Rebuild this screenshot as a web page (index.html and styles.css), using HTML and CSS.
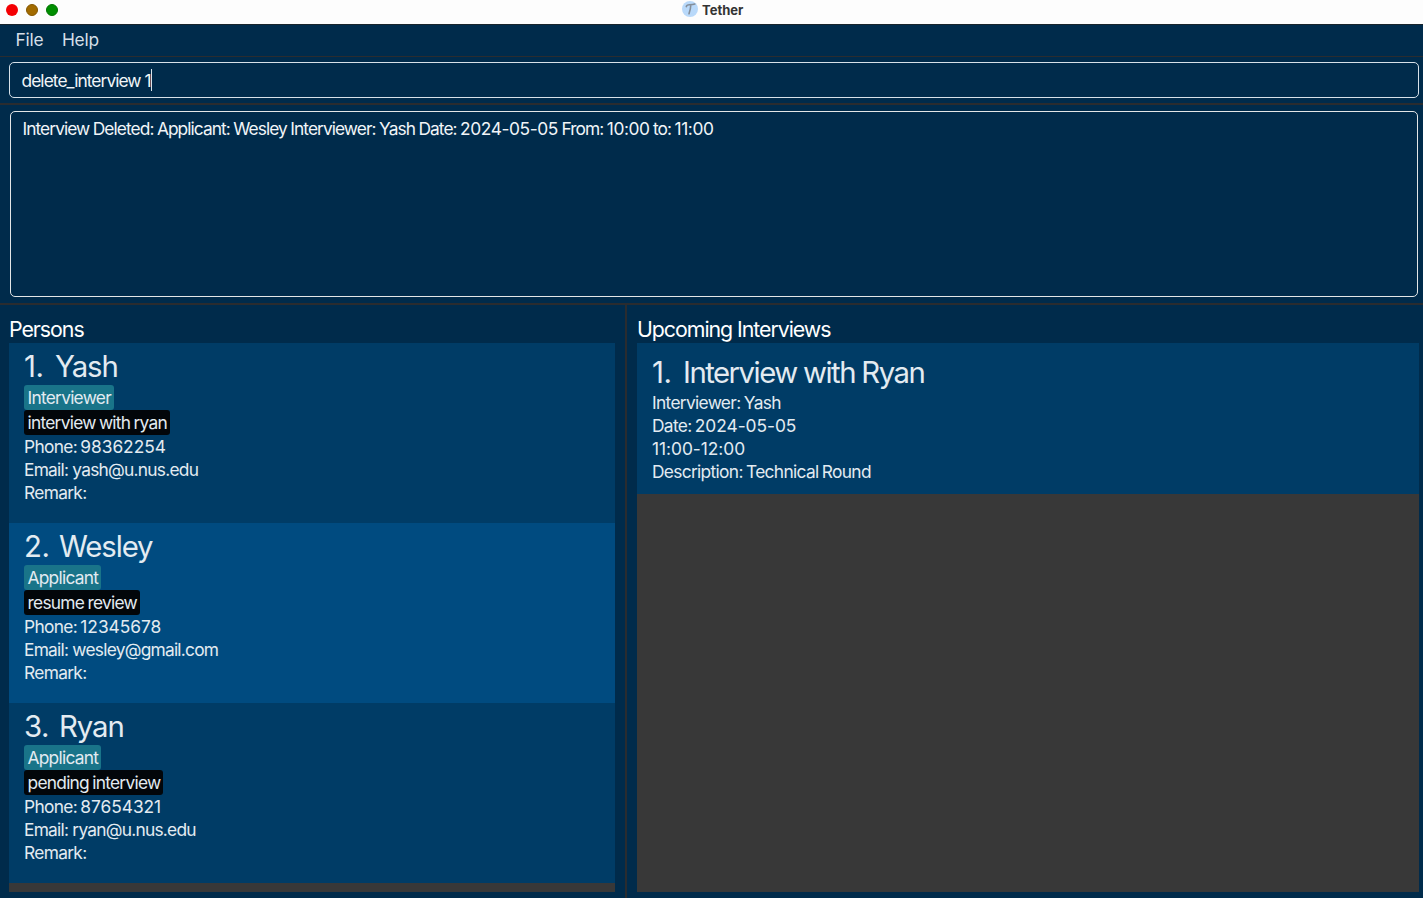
FILE: index.html
```html
<!DOCTYPE html>
<html lang="en">
<head>
<meta charset="utf-8">
<title>Tether</title>
<link rel="stylesheet" href="styles.css">
</head>
<body>
<div class="window">
  <header class="titlebar">
    <div class="lights"><span class="light red"></span><span class="light amber"></span><span class="light green"></span></div>
    <svg class="logo" viewBox="0 0 16 16"><circle cx="8" cy="8" r="8" fill="#b9d9fa"/><path d="M4.300 5.600C4.500 3.900 5.600 3.800 7.500 3.800C9.500 3.800 11.200 3.800 12.800 3.100M8.800 4C8.700 7 8.200 9.500 7 12.700" fill="none" stroke="#858e99" stroke-width="1.600" stroke-linecap="round"/></svg>
    <span class="title">Tether</span>
  </header>
  <nav class="menu"><span>File</span><span>Help</span></nav>
  <div class="command-row"><div class="command"><span>delete_interview 1</span><span class="caret"></span></div></div>
  <div class="result-row"><div class="result">Interview Deleted: Applicant: Wesley Interviewer: Yash Date: <span class="figures">2024-05-05</span> From: <span class="figures">10:00</span> to: <span class="figures">11:00</span></div></div>
  <main class="panels">
    <section class="panel persons">
      <h2 class="heading">Persons</h2>
      <div class="list">
        <article class="card">
          <h3 class="name"><span class="num one">1.</span><span>Yash</span></h3>
          <div class="tag role">Interviewer</div>
          <div class="tag status">interview with ryan</div>
          <p class="line">Phone: <span class="figures">98362254</span></p>
          <p class="line email">Email: yash@u.nus.edu</p>
          <p class="line">Remark:</p>
        </article>
        <article class="card alt">
          <h3 class="name"><span class="num">2.</span><span>Wesley</span></h3>
          <div class="tag role">Applicant</div>
          <div class="tag status">resume review</div>
          <p class="line">Phone: <span class="figures">12345678</span></p>
          <p class="line email">Email: wesley@gmail.com</p>
          <p class="line">Remark:</p>
        </article>
        <article class="card">
          <h3 class="name"><span class="num">3.</span><span>Ryan</span></h3>
          <div class="tag role">Applicant</div>
          <div class="tag status">pending interview</div>
          <p class="line">Phone: <span class="figures">87654321</span></p>
          <p class="line email">Email: ryan@u.nus.edu</p>
          <p class="line">Remark:</p>
        </article>
      </div>
    </section>
    <section class="panel interviews">
      <h2 class="heading">Upcoming Interviews</h2>
      <div class="list">
        <article class="card interview">
          <h3 class="name"><span class="num one">1.</span><span>Interview with Ryan</span></h3>
          <p class="line">Interviewer: Yash</p>
          <p class="line">Date: <span class="figures">2024-05-05</span></p>
          <p class="line"><span class="figures">11:00-12:00</span></p>
          <p class="line">Description: Technical Round</p>
        </article>
      </div>
    </section>
  </main>
</div>
</body>
</html>
```
FILE: styles.css
```css
* { box-sizing: border-box; }
body { margin: 0; font-family: Inter, "Liberation Sans", sans-serif; font-size: 17.33px; letter-spacing: -0.67px; word-spacing: -0.9px; color: #e3ebf1; white-space: nowrap; overflow: hidden; }
h2, h3, p { margin: 0; font-weight: 400; }
.window { width: 1423px; height: 898px; display: flex; flex-direction: column; background: #002b4b; }
.titlebar { height: 24px; flex: none; display: grid; grid-template-columns: 682px 20px auto; background: #fdfdfd; padding-bottom: 4px; align-items: center; }
.lights { display: flex; gap: 8px; padding-left: 6px; }
.light { width: 12px; height: 12px; border-radius: 50%; }
.red { background: #f40003; }
.amber { background: #a26b00; border: 1px solid #855700; }
.green { background: #008e00; border: 1px solid #007500; }
.logo { width: 16px; height: 16px; display: block; margin-top: -2px; }
.title { font-size: 13px; font-weight: 700; letter-spacing: 0; color: #333; line-height: 20px; margin-top: -1px; }
.menu { height: 33px; flex: none; border-top: 1px solid #18242c; border-bottom: 1px solid #2a2c2f; padding-left: 15.5px; display: flex; gap: 18.5px; line-height: 30px; color: #d5dfe7; letter-spacing: -0.2px; }
.command-row { height: 48px; flex: none; padding: 5px 4px 5px 9px; border-bottom: 2px solid #2a2c2f; }
.command { height: 36px; border: 1px solid #d7e1e9; border-radius: 5px; padding-left: 11.5px; display: flex; align-items: center; color: #f1f5f8; letter-spacing: -0.92px; word-spacing: 0; }
.caret { width: 1px; height: 22px; background: #dbe4eb; }
.result-row { height: 200px; flex: none; padding: 6px 5px 6px 10px; border-bottom: 2px solid #2a2c2f; }
.result { height: 186px; border: 1px solid #e3e6e7; border-radius: 5px; padding: 5px 0 0 11.5px; line-height: 23px; color: #f1f5f8; letter-spacing: -0.93px; word-spacing: -0.5px; }
.panels { flex: 1; min-height: 0; display: grid; grid-template-columns: 627px 796px; }
.panel { display: flex; flex-direction: column; min-height: 0; }
.persons { padding: 10px 10px 6px 9px; border-right: 2px solid #2a2c2f; }
.interviews { padding: 10px 4px 6px 10px; }
.heading { height: 28px; flex: none; font-size: 21.33px; line-height: 28px; color: #fff; letter-spacing: -1.04px; word-spacing: 0; }
.list { flex: 1; min-height: 0; background: #383838; }
.card { height: 180px; background: #003c66; padding: 6px 15px; }
.card.alt { background: #004b80; }
.card.interview { height: 151px; padding-top: 12px; }
.name { height: 36px; font-size: 29.33px; line-height: 36px; display: flex; letter-spacing: -1.1px; word-spacing: 0; }
.interview .name { letter-spacing: -1.5px; word-spacing: -0.5px; }
.name .num { width: 35px; letter-spacing: -0.4px; }
.name .num.one { width: 31px; }
.tag { width: max-content; height: 25px; line-height: 25px; padding: 0 3px 0 3.5px; border-radius: 3px; letter-spacing: -0.73px; }
.role { background: #197489; }
.status { background: #02060a; }
.line { height: 23px; line-height: 23px; }
.email { letter-spacing: -0.75px; word-spacing: 0; }
.line .figures { letter-spacing: -0.03px; }
.result .figures { letter-spacing: -0.4px; }
```
